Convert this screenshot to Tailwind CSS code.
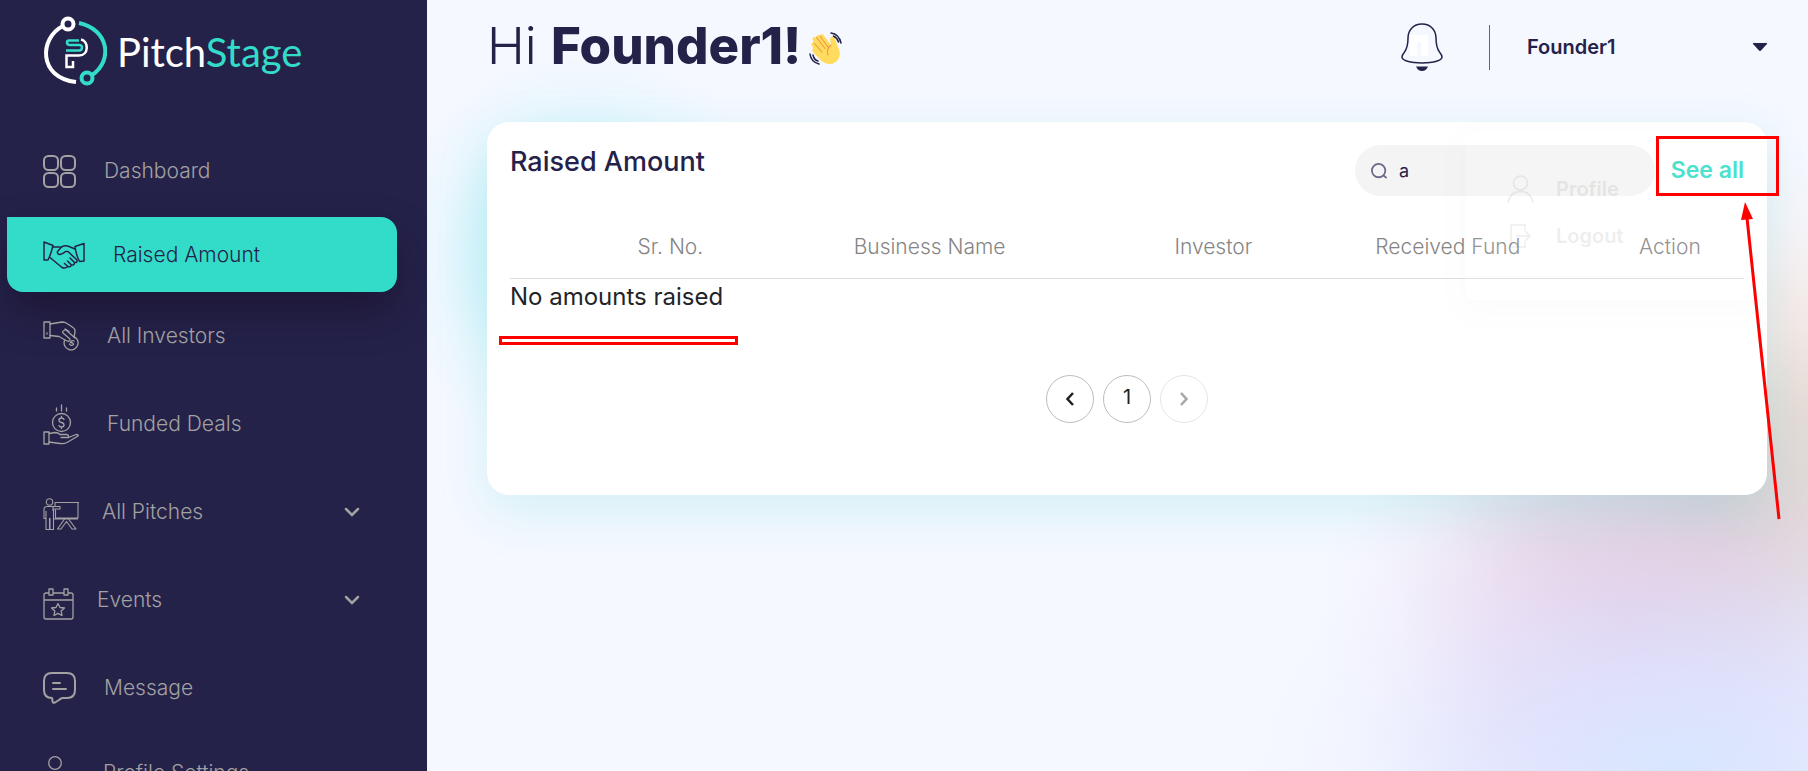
<!DOCTYPE html>
<html lang="en">
<head>
    <meta charset="UTF-8">
    <meta name="viewport" content="width=device-width, initial-scale=1.0">
    <script src="https://cdn.jsdelivr.net/npm/@tailwindcss/browser@4"></script>
    <title>PitchStage - Raised Amount</title>
</head>
<body class="flex h-screen overflow-hidden bg-[#f5f8ff] font-['Inter','Liberation_Sans',sans-serif] text-[#25224a]">

    <!-- Sidebar -->
    <aside class="w-[427px] shrink-0 h-screen overflow-hidden bg-[#25224a] text-[#a3a1a1]">
        <a href="#" class="flex items-start h-[125px] pl-[43px] pt-4" aria-label="PitchStage">
            <svg class="w-16 h-[71px]" viewBox="0 0 64 71" fill="none" stroke-width="4">
                <circle cx="25" cy="8" r="5.5" stroke="#fff"/>
                <path d="M20 10C-4 22 -5 62 33 66" stroke="#fff"/>
                <path d="M36 7C65 13 71 44 49 59" stroke="#33dcc8"/>
                <circle cx="44" cy="62" r="5.500" stroke="#33dcc8"/>
                <path d="M36 24.500H26Q24 24.500 24 26.500Q24 29 27 29H36Q39 29 39 31.500Q39 34.500 36 34.500H23" stroke="#33dcc8" stroke-width="2.500"/>
                <path d="M38 23.500C46 25 46 39.500 36 39.500H23.500V51H30V45" stroke="#fff" stroke-width="2.500"/>
            </svg>
            <span class="pl-[10px] pt-3 font-['Lato',sans-serif] text-[40px] leading-[48px] font-normal text-white">Pitch<span class="text-[#33dcc8]">Stage</span></span>
        </a>

        <nav class="flex flex-col text-[21px] leading-7 font-light">
            <a href="#" class="flex items-center gap-7 h-[92px] pl-[43px]">
                <svg class="w-[33px] h-[33px]" viewBox="0 0 33 33" fill="none" stroke="currentColor" stroke-width="2">
                    <rect x="1" y="1" width="14" height="14" rx="4.500"/>
                    <rect x="18" y="1" width="14" height="14" rx="4.500"/>
                    <rect x="1" y="18" width="14" height="14" rx="4.500"/>
                    <rect x="18" y="18" width="14" height="14" rx="4.500"/>
                </svg>
                Dashboard
            </a>
            <a href="#" class="flex items-center gap-7 h-[75px] ml-[7px] mr-[30px] pl-9 rounded-2xl rounded-tl-none bg-[#33dcc8] text-[#25224a] shadow-[0_20px_40px_rgba(20,10,30,0.45)]">
                <svg class="w-[42px] h-[28px]" viewBox="0 0 42 28" fill="none" stroke="currentColor" stroke-width="1.500" stroke-linejoin="round" stroke-linecap="round">
                    <path d="M1 1L10 4.500Q8 13 5 19L1 19Z"/>
                    <path d="M41 2.500L32 5.500Q33 14 36.500 20.500L41 20Z"/>
                    <path d="M10 6H17M32 8L26 5.500Q22 4 18.500 6L14.500 10.500Q14 13.500 17 13.500Q20 13 22.500 10.500H25L34 19Q34.500 22 31.500 21.500L27 17"/>
                    <path d="M31.500 21.500Q31.500 24.500 28.500 24L24.500 20M28.500 24Q27.500 26.500 25 25.500L21.500 22.500M25 25.500Q22 28 19 26.500L13 21.500L7 16.500"/>
                </svg>
                Raised Amount
            </a>
            <a href="#" class="flex items-center gap-7 h-[88px] pl-[43px]">
                <svg class="w-9 h-[30px]" viewBox="0 0 36 30" fill="none" stroke="currentColor" stroke-width="1.300" stroke-linejoin="round" stroke-linecap="round">
                    <path d="M1 1H7V17H1Z"/>
                    <path d="M4 12V13"/>
                    <path d="M7 3L19 1Q22 1 24 2.500L30 6.500Q32.500 8 32 11L31 16M7 14.500L16 15.500L24 20Q27.500 21 27 18L20 12Q19 10.500 21 9.500L23 8.500L26 10.500"/>
                    <path d="M22 8L32 17"/>
                    <path d="M31 15.500A7 7 0 1 1 21.500 19.500"/>
                    <path d="M31 20Q28 19 27.500 21.500Q31 22 30.500 23.500Q28 25.500 26.500 23"/>
                </svg>
                All Investors
            </a>
            <a href="#" class="flex items-center gap-7 h-[88px] pl-[43px]">
                <svg class="w-9 h-[41px]" viewBox="0 0 36 41" fill="none" stroke="currentColor" stroke-width="1.300" stroke-linejoin="round" stroke-linecap="round">
                    <path d="M18.500 1V7M13.500 4V7M23.500 4V7"/>
                    <circle cx="18.500" cy="18.500" r="9"/>
                    <path d="M21 15.500Q20.500 14 18.500 14Q16 14 16 16.200Q16 18 18.500 18.500Q21 19 21 21Q21 23 18.500 23Q16.500 23 16 21.500M18.500 12.500V14M18.500 23V24.500"/>
                    <path d="M1 28H6V40H1Z"/>
                    <path d="M6 29.500L12 28.500Q15 28.500 17 30.500H24Q26 31 25.500 33.500H18M25.500 33.500L33 30.500Q35.500 30.500 35 32L24 38.500Q21 40 17 39.500L6 38"/>
                </svg>
                Funded Deals
            </a>
            <button type="button" class="flex items-center h-[88px] pl-[43px] pr-[67px]">
                <svg class="w-9 h-8 mt-1" viewBox="0 0 36 32" fill="none" stroke="currentColor" stroke-width="1.100" stroke-linejoin="round">
                    <circle cx="6.500" cy="4" r="3.200"/>
                    <path d="M3 20.500H1V12Q1 8.500 4 8.500H17V11H10.500V31.500H7V20M6.500 20V31.500H3V13M10 13V8.500"/>
                    <path d="M12 8.500V4.500H36M12.500 11.500V20H35V4.500M10.500 21H35"/>
                    <path d="M21.500 21L14.500 31H18L23.500 23.500L29 31H33L25.500 21"/>
                </svg>
                <span class="pl-[23px]">All Pitches</span>
                <svg class="w-4 h-[10px] ml-auto" viewBox="0 0 16 10" fill="none" stroke="currentColor" stroke-width="2.500" stroke-linecap="round"><path d="M2 2L8 8L14 2"/></svg>
            </button>
            <button type="button" class="flex items-center h-[88px] pl-[43px] pr-[67px]">
                <svg class="w-[31px] h-8 mt-2" viewBox="0 0 31 32" fill="none" stroke="currentColor" stroke-width="1.300" stroke-linejoin="round">
                    <path d="M6 5H3Q1 5 1 7V29Q1 31 3 31H28Q30 31 30 29V7Q30 5 28 5H25M10 5H21M1 12H30"/>
                    <path d="M6 1H10V7H6ZM21 1H25V7H21Z"/>
                    <path d="M15 15.500L17 19.500L21.500 20L18.200 23L19 27.500L15 25.400L11 27.500L11.800 23L8.500 20L13 19.500Z"/>
                </svg>
                <span class="pl-[23px]">Events</span>
                <svg class="w-4 h-[10px] ml-auto" viewBox="0 0 16 10" fill="none" stroke="currentColor" stroke-width="2.500" stroke-linecap="round"><path d="M2 2L8 8L14 2"/></svg>
            </button>
            <a href="#" class="flex items-center gap-7 h-[88px] pl-[43px]">
                <svg class="w-[33px] h-8" viewBox="0 0 33 32" fill="none" stroke="currentColor" stroke-width="2" stroke-linejoin="round" stroke-linecap="round">
                    <path d="M9 26Q1 26 1 18V9Q1 1 9 1H24Q32 1 32 9V18Q32 26 24 26H20Q18 26 16 28L12 30.500Q9.500 31.500 9.500 29Z"/>
                    <path d="M10 11H17M10 17H23"/>
                </svg>
                Message
            </a>
            <a href="#" class="flex items-center gap-9 h-[82px] pl-[43px]">
                <svg class="w-6 h-9" viewBox="0 0 24 36" fill="none" stroke="currentColor" stroke-width="1.300">
                    <circle cx="12" cy="8" r="6.300"/>
                    <path d="M1 36V28Q1 18 12 18Q23 18 23 28V36"/>
                </svg>
                Profile Settings
            </a>
        </nav>
    </aside>

    <!-- Page -->
    <main class="relative flex-1 min-w-0 pl-[60px] pr-[41px]">

        <!-- background glow -->
        <div class="absolute inset-0 overflow-hidden">
            <div class="absolute left-[-40px] top-[50px] w-[400px] h-[410px] bg-[radial-gradient(closest-side,#8feaf3a0,#8feaf360_45%,#8feaf318_75%,transparent)]"></div>
            <div class="absolute right-[-250px] bottom-[100px] w-[500px] h-[520px] bg-[radial-gradient(closest-side,#ffd5c480,#ffd5c450_45%,#ffd5c418_75%,transparent)]"></div>
            <div class="absolute right-[-250px] bottom-[20px] w-[700px] h-[500px] bg-[radial-gradient(closest-side,#c0c8c090,#c0c8c058_45%,#c0c8c014_75%,transparent)]"></div>
            <div class="absolute right-[-130px] bottom-[-130px] w-[620px] h-[560px] bg-[radial-gradient(closest-side,#eab8e480,#eab8e458_40%,#eab8e416_75%,transparent)]"></div>
            <div class="absolute right-[-300px] bottom-[-280px] w-[860px] h-[560px] bg-[radial-gradient(closest-side,#d8e6ff,#d8e0ff90_45%,#d8e0ff20_75%,transparent)]"></div>
        </div>

        <header class="relative flex items-center h-[92px] mb-[30px]">
            <h1 class="text-[51px] leading-[60px] font-light whitespace-nowrap">Hi <span class="font-extrabold">Founder1!</span></h1>
            <svg class="w-[33px] h-[33px] ml-2 mt-1" viewBox="0 0 33 33" fill="none">
                <path d="M3 14Q1.500 11 4 10.500L5 11L3.500 7Q3.500 4.500 6.500 5L7.500 5.500Q7 2.500 9.500 3L11 4Q11.500 1 14 2.500L22 13L21 7Q21.500 4 24 4.500Q26 5 26.500 8L30.500 19Q32 26 26 30.500Q19 34.500 12.500 29L4 20Q2 18 4.500 16.500Z" fill="#ffdc5d"/>
                <path d="M5 11L13 20M7.500 5.500L16 16.500M11 4L19 15M22 13Q17 17 19 23" stroke="#ef9645" stroke-width="1.100" stroke-linecap="round"/>
                <path d="M22 1Q30 2 32 11M24.500 4Q28.500 6 29.500 10" stroke="#25224a" stroke-width="1.500" stroke-linecap="round"/>
                <path d="M1 22Q2 30 10 32M4 23Q5 28 9 29" stroke="#25224a" stroke-width="1.500" stroke-linecap="round"/>
            </svg>
            <div class="flex items-center ml-auto mt-[2px]">
                <button type="button" aria-label="Notifications">
                    <svg class="w-[42px] h-12" viewBox="0 0 42 48" fill="none">
                        <path d="M21 1C12 1 7 7.500 7 15C7 22 6.500 25 3.500 29C1.500 31.500 1 32 1 34C1 37.500 9 40 21 40C33 40 41 37.500 41 34C41 32 40.500 31.500 38.500 29C35.500 25 35 22 35 15C35 7.500 30 1 21 1Z" stroke="#25224a" stroke-width="1.500"/>
                        <path d="M9 12H27V33H20V19H16V33H9Z" fill="#fff"/>
                        <path d="M15 43.500H27Q25 48 21 48Q17 48 15 43.500Z" fill="#25224a"/>
                    </svg>
                </button>
                <div class="w-px h-[45px] ml-[46px] mr-[37px] bg-[#25224a]/70"></div>
                <button type="button" class="flex items-center justify-between w-[240px] text-[20px] leading-7 font-semibold">
                    Founder1
                    <svg class="w-[14px] h-2" viewBox="0 0 14 8" fill="currentColor"><path d="M0 0H14V1L7.500 8H6.500L0 1Z"/></svg>
                </button>
            </div>
        </header>

        <section class="relative px-[23px] pt-[23px] pb-[72px] rounded-[22px] bg-white shadow-[0_16px_50px_rgba(50,210,200,0.17)]">
            <div class="flex items-start">
                <h2 class="pt-px text-[27px] leading-8 font-medium">Raised Amount</h2>
                <label class="flex items-center gap-3 w-[300px] h-[51px] ml-auto px-4 rounded-full bg-[#f4f4f4]">
                    <svg class="w-[18px] h-[18px]" viewBox="0 0 18 18" fill="none" stroke="#6b698c" stroke-width="2"><circle cx="8.500" cy="8.500" r="7.500"/><path d="M13.500 13.500L17.500 17"/></svg>
                    <input type="text" value="a" aria-label="Search" class="w-full min-w-0 bg-transparent text-[18px] leading-6 outline-none">
                </label>
                <div class="relative ml-4">
                    <a href="#" class="flex items-center h-[50px] text-[23px] leading-7 font-semibold text-[#33dcc8] whitespace-nowrap">See all</a>
                    <!-- marked area and its arrow -->
                    <div class="absolute z-20 right-[-35px] top-[-9px] w-[123px] h-[60px] border-3 border-[#ff0000]"></div>
                    <svg class="absolute z-20 right-[-38px] top-[57px] w-[46px] h-[320px]" viewBox="0 0 46 320" fill="none">
                        <path d="M11 16L43 317" stroke="#ff0000" stroke-width="3"/>
                        <path d="M9 0L17 17L5 18Z" fill="#ff0000"/>
                    </svg>
                </div>
            </div>

            <!-- profile menu, fading out -->
            <div class="absolute z-10 right-0 top-[10px] w-[301px] h-[168px] pl-[41px] pt-10 bg-white rounded-lg opacity-12 shadow-[0_8px_24px_rgba(0,0,0,0.12)] text-[20px] leading-7 font-semibold text-[#777]">
                <a href="#" class="flex items-center gap-[22px] h-[34px]">
                    <svg class="w-[27px] h-7" viewBox="0 0 27 28" fill="none" stroke="currentColor" stroke-width="1.500"><circle cx="13.500" cy="8" r="7"/><path d="M1 28Q3 16.500 13.500 16.500Q24 16.500 26 28"/></svg>
                    Profile
                </a>
                <a href="#" class="flex items-center gap-[22px] h-[34px] mt-[13px]">
                    <svg class="w-[27px] h-6" viewBox="0 0 27 24" fill="none" stroke="currentColor" stroke-width="1.500"><path d="M18 6V1H4V23H18V18M9 12H23M18 7L23 12L18 17"/></svg>
                    Logout
                </a>
            </div>

            <table class="w-full mt-[21px] table-fixed">
                <thead>
                    <tr class="h-[61px] border-b border-[#dedede] text-[21px] leading-7 text-[#858585]">
                        <td class="w-[8%]"></td>
                        <th class="w-[10%] font-light">Sr. No.</th>
                        <th class="w-[32%] font-light">Business Name</th>
                        <th class="w-[14%] font-light">Investor</th>
                        <th class="w-[24%] font-light">Received Fund</th>
                        <th class="w-[12%] font-light">Action</th>
                    </tr>
                </thead>
                <tbody>
                    <tr class="h-9">
                        <td colspan="6" class="text-[24px] leading-9 text-[#212529]">No amounts raised</td>
                    </tr>
                </tbody>
            </table>
            <div class="absolute left-3 top-[214px] w-[239px] h-[9px] border-3 border-[#ff0000]"></div>

            <div class="flex justify-center gap-[9px] mt-[60px] text-[20px] leading-7 text-[#212121]">
                <button type="button" aria-label="Previous page" class="flex items-center justify-center w-12 h-12 rounded-full border border-[#bdbdbd]">
                    <svg class="w-2 h-[14px]" viewBox="0 0 8 14" fill="none" stroke="currentColor" stroke-width="2.500"><path d="M7 1L1.500 7L7 13"/></svg>
                </button>
                <button type="button" class="w-12 h-12 pb-1 rounded-full border border-[#bdbdbd]">1</button>
                <button type="button" disabled aria-label="Next page" class="flex items-center justify-center w-12 h-12 rounded-full border border-[#e5e5e5] text-[#a6a6a6]">
                    <svg class="w-2 h-[14px]" viewBox="0 0 8 14" fill="none" stroke="currentColor" stroke-width="2.500"><path d="M1 1L6.500 7L1 13"/></svg>
                </button>
            </div>
        </section>
    </main>

</body>
</html>
